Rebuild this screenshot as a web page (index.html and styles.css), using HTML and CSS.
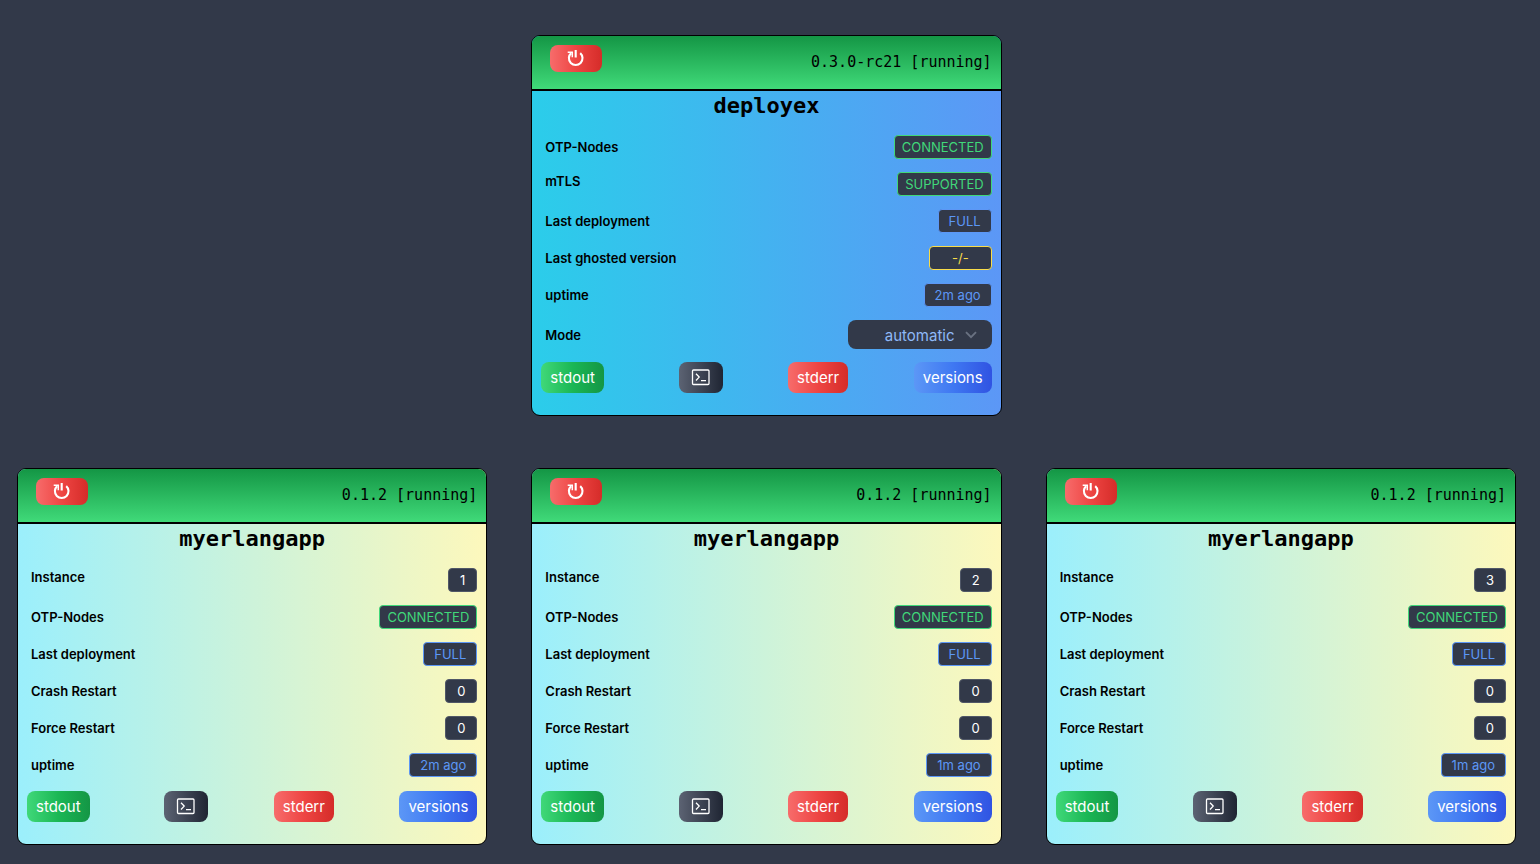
FILE: index.html
```html
<!DOCTYPE html>
<html lang="en">
<head>
<meta charset="utf-8">
<meta name="viewport" content="width=device-width, initial-scale=1">
<title>deployex</title>
<link rel="stylesheet" href="styles.css">
</head>
<body>
<svg class="sprite" aria-hidden="true">
  <symbol id="power" viewBox="0 0 18 18">
    <path d="M4.2 3.1A6.8 6.8 0 1 0 13.2 3.1" fill="none" stroke="currentColor" stroke-width="2.1"/>
    <path d="M8.7 0v7.6" fill="none" stroke="currentColor" stroke-width="2.1"/>
    <path d="M0.7 2.2H5.3V7.2" fill="none" stroke="currentColor" stroke-width="1.5"/>
  </symbol>
  <symbol id="terminal" viewBox="0 0 20 18">
    <rect x="1.5" y="1" width="16.5" height="14.5" rx="1" fill="none" stroke="currentColor" stroke-width="1.3"/>
    <path d="M5 4.7 8.2 8.1 5 11.5M10 11.7h5" fill="none" stroke="currentColor" stroke-width="1.3"/>
  </symbol>
</svg>
<main class="board">
  <section class="card card-main">
    <header class="card-head">
      <button class="btn power" aria-label="Restart deployex"><svg class="icon-power"><use href="#power"/></svg></button>
      <span class="version">0.3.0-rc21 [running]</span>
    </header>
    <h2 class="title">deployex</h2>
    <dl class="rows">
      <div class="row"><dt>OTP-Nodes</dt><dd class="badge ok">CONNECTED</dd></div>
      <div class="row raised"><dt>mTLS</dt><dd class="badge ok">SUPPORTED</dd></div>
      <div class="row"><dt>Last deployment</dt><dd class="badge info">FULL</dd></div>
      <div class="row"><dt>Last ghosted version</dt><dd class="badge warn">-/-</dd></div>
      <div class="row"><dt>uptime</dt><dd class="badge info">2m ago</dd></div>
      <div class="row"><dt><label for="mode">Mode</label></dt>
        <dd class="picker">
          <select id="mode" class="mode"><option>automatic</option></select>
          <svg class="chevron" viewBox="0 0 12 8"><path d="M1 1.2 6 6.2 11 1.2" fill="none" stroke="currentColor" stroke-width="1.9"/></svg>
        </dd>
      </div>
    </dl>
    <footer class="actions">
      <button class="btn green">stdout</button>
      <button class="btn dark" aria-label="Terminal"><svg class="icon-term"><use href="#terminal"/></svg></button>
      <button class="btn red">stderr</button>
      <button class="btn blue">versions</button>
    </footer>
  </section>

  <section class="card">
    <header class="card-head">
      <button class="btn power" aria-label="Restart instance 1"><svg class="icon-power"><use href="#power"/></svg></button>
      <span class="version">0.1.2 [running]</span>
    </header>
    <h2 class="title">myerlangapp</h2>
    <dl class="rows">
      <div class="row raised"><dt>Instance</dt><dd class="badge plain">1</dd></div>
      <div class="row"><dt>OTP-Nodes</dt><dd class="badge ok">CONNECTED</dd></div>
      <div class="row"><dt>Last deployment</dt><dd class="badge info">FULL</dd></div>
      <div class="row"><dt>Crash Restart</dt><dd class="badge plain">0</dd></div>
      <div class="row"><dt>Force Restart</dt><dd class="badge plain">0</dd></div>
      <div class="row"><dt>uptime</dt><dd class="badge info">2m ago</dd></div>
    </dl>
    <footer class="actions">
      <button class="btn green">stdout</button>
      <button class="btn dark" aria-label="Terminal"><svg class="icon-term"><use href="#terminal"/></svg></button>
      <button class="btn red">stderr</button>
      <button class="btn blue">versions</button>
    </footer>
  </section>

  <section class="card">
    <header class="card-head">
      <button class="btn power" aria-label="Restart instance 2"><svg class="icon-power"><use href="#power"/></svg></button>
      <span class="version">0.1.2 [running]</span>
    </header>
    <h2 class="title">myerlangapp</h2>
    <dl class="rows">
      <div class="row raised"><dt>Instance</dt><dd class="badge plain">2</dd></div>
      <div class="row"><dt>OTP-Nodes</dt><dd class="badge ok">CONNECTED</dd></div>
      <div class="row"><dt>Last deployment</dt><dd class="badge info">FULL</dd></div>
      <div class="row"><dt>Crash Restart</dt><dd class="badge plain">0</dd></div>
      <div class="row"><dt>Force Restart</dt><dd class="badge plain">0</dd></div>
      <div class="row"><dt>uptime</dt><dd class="badge info">1m ago</dd></div>
    </dl>
    <footer class="actions">
      <button class="btn green">stdout</button>
      <button class="btn dark" aria-label="Terminal"><svg class="icon-term"><use href="#terminal"/></svg></button>
      <button class="btn red">stderr</button>
      <button class="btn blue">versions</button>
    </footer>
  </section>

  <section class="card">
    <header class="card-head">
      <button class="btn power" aria-label="Restart instance 3"><svg class="icon-power"><use href="#power"/></svg></button>
      <span class="version">0.1.2 [running]</span>
    </header>
    <h2 class="title">myerlangapp</h2>
    <dl class="rows">
      <div class="row raised"><dt>Instance</dt><dd class="badge plain">3</dd></div>
      <div class="row"><dt>OTP-Nodes</dt><dd class="badge ok">CONNECTED</dd></div>
      <div class="row"><dt>Last deployment</dt><dd class="badge info">FULL</dd></div>
      <div class="row"><dt>Crash Restart</dt><dd class="badge plain">0</dd></div>
      <div class="row"><dt>Force Restart</dt><dd class="badge plain">0</dd></div>
      <div class="row"><dt>uptime</dt><dd class="badge info">1m ago</dd></div>
    </dl>
    <footer class="actions">
      <button class="btn green">stdout</button>
      <button class="btn dark" aria-label="Terminal"><svg class="icon-term"><use href="#terminal"/></svg></button>
      <button class="btn red">stderr</button>
      <button class="btn blue">versions</button>
    </footer>
  </section>
</main>
</body>
</html>
```
FILE: styles.css
```css
* { box-sizing: border-box; }

body {
  margin: 0;
  background: #323949;
  color: #000;
  font-family: Inter, "Liberation Sans", sans-serif;
  font-size: 13px;
}

.sprite { display: none; }

.board {
  display: grid;
  grid-template-columns: repeat(3, minmax(0, 1fr));
  gap: 52px 44px;
  padding: 35px 24px 19px 17px;
}

.card {
  border: 1px solid #000;
  border-radius: 9px;
  overflow: hidden;
  background: linear-gradient(to right, #9beffc, #cdf3da 50%, #fdf8bc);
}

.card-main {
  grid-column: 2;
  background: linear-gradient(to right, #2bcdea, #5c97f6);
}

/* Instances start on their own line below the main card. */
.card-main + .card { grid-column: 1; }

.card-head {
  display: flex;
  justify-content: space-between;
  align-items: flex-start;
  height: 55px;
  padding: 9px 9px 0 18px;
  border-bottom: 2px solid #000;
  background: linear-gradient(to bottom, #149645, #40da79);
}

.version {
  font-family: "DejaVu Sans Mono", monospace;
  font-size: 15px;
  line-height: 34px;
}

.title {
  margin: 0;
  height: 44px;
  text-align: center;
  font: bold 22px/30px "DejaVu Sans Mono", monospace;
}

.rows {
  display: grid;
  gap: 13px;
  margin: 0;
  padding: 0 9px 0 13px;
}

.row {
  display: flex;
  justify-content: space-between;
  align-items: center;
}

.row dt {
  font-weight: 600;
  line-height: 18px;
}

.row dd { margin: 0; }

.raised dt { align-self: flex-start; }

.badge {
  height: 24px;
  padding: 0 11px;
  border: 1px solid;
  border-radius: 4px;
  background: #323949;
  font-size: 13px;
  line-height: 22px;
}

.ok { padding: 0 7px; color: #40d879; border-color: #40d879; }
.info { padding: 0 10px; color: #5c97f6; border-color: #5c97f6; }
.warn { padding: 0 22px; color: #f9dd4a; border-color: #f9dd4a; }
.plain { color: #fff; border-color: #505767; }

.picker {
  display: grid;
  align-items: center;
}

.mode {
  grid-area: 1 / 1;
  width: 144px;
  height: 29px;
  padding: 2px 0 0;
  border: 0;
  border-radius: 8px;
  appearance: none;
  background: #323949;
  color: #8fb9f8;
  font: 15px Inter, "Liberation Sans", sans-serif;
  text-align: center;
  text-align-last: center;
}

.chevron {
  grid-area: 1 / 1;
  justify-self: end;
  width: 12px;
  height: 8px;
  margin-right: 15px;
  color: #697181;
  pointer-events: none;
}

.actions {
  display: flex;
  justify-content: space-between;
  padding: 14px 9px 22px;
}

.card-main .actions { padding-top: 13px; }

.btn {
  display: flex;
  align-items: center;
  justify-content: center;
  height: 31px;
  padding: 0 9px;
  border: 0;
  border-radius: 8px;
  color: #fff;
  font: 15px Inter, "Liberation Sans", sans-serif;
}

.green { background: linear-gradient(to right, #40d879, #1bb755 50%, #149645); }
.red, .power { background: linear-gradient(to right, #f76c6b, #ee4543 50%, #d52c29); }
.blue { background: linear-gradient(to right, #5c97f6, #3f78f2 50%, #3053e2); }

.dark {
  width: 44px;
  margin-left: 9px;
  background: linear-gradient(to right, #5c6373, #1f2533);
}

.power {
  width: 52px;
  height: 27px;
}

.icon-power { width: 18px; height: 18px; flex: none; }
.icon-term { width: 20px; height: 18px; flex: none; }

@media (max-width: 1100px) {
  .board { grid-template-columns: minmax(0, 1fr); }
  .card-main { grid-column: 1; }
}
```
